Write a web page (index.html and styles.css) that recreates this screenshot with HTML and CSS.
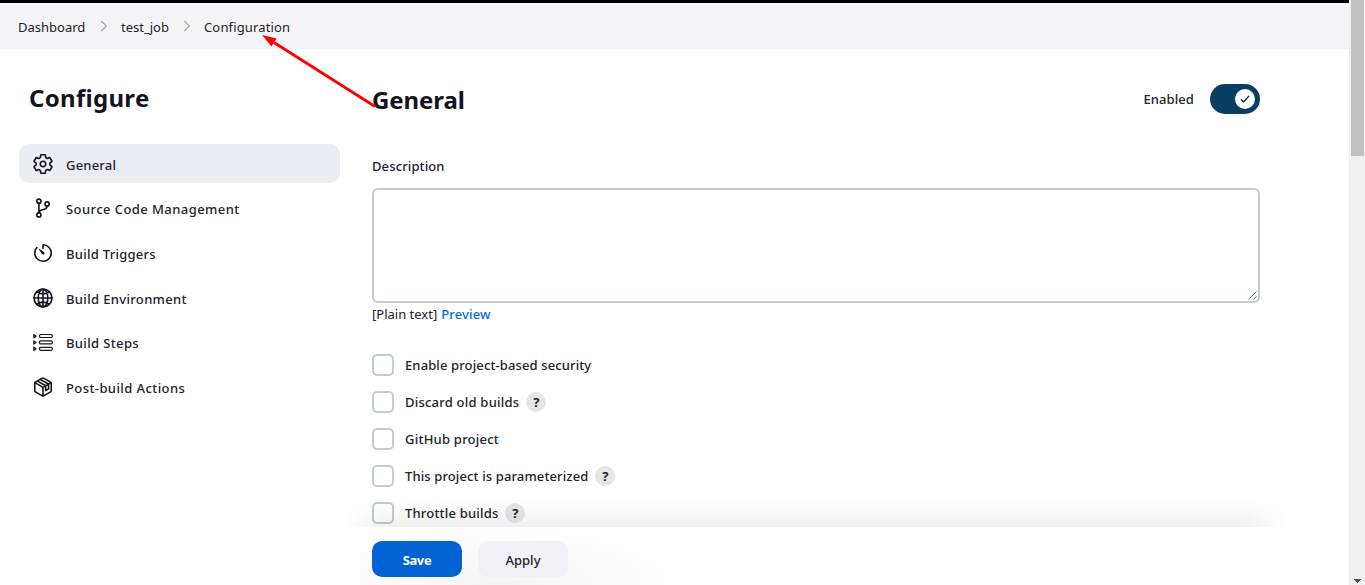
FILE: index.html
```html
<!DOCTYPE html>
<html lang="en">
<head>
<meta charset="utf-8">
<title>test_job Config</title>
<link rel="stylesheet" href="styles.css">
</head>
<body>
<div class="window">
  <div class="page">
    <nav class="breadcrumbs">
      <span class="crumb crumb-dash">Dashboard</span>
      <svg class="chevron" width="8" height="12" viewBox="0 0 8 12"><path d="M1.3 1l5 5-5 5"/></svg>
      <span class="crumb crumb-job">test_job</span>
      <svg class="chevron" width="8" height="12" viewBox="0 0 8 12"><path d="M1.3 1l5 5-5 5"/></svg>
      <span class="crumb crumb-config">Configuration</span>
    </nav>
    <div class="columns">
      <aside class="sidebar">
        <h1 class="title">Configure</h1>
        <ul class="tasks">
          <li class="task task-active">
            <svg class="icon" viewBox="0 0 512 512"><path d="M262.29 192.31a64 64 0 1057.4 57.4 64.13 64.13 0 00-57.4-57.4zM416.39 256a154.34 154.34 0 01-1.53 20.79l45.21 35.46a10.81 10.81 0 012.45 13.75l-42.77 74a10.81 10.81 0 01-13.14 4.59l-44.9-18.08a16.11 16.11 0 00-15.17 1.75A164.48 164.48 0 01325 400.8a15.94 15.94 0 00-8.82 12.14l-6.73 47.89a11.08 11.08 0 01-10.68 9.17h-85.54a11.11 11.11 0 01-10.69-8.87l-6.72-47.82a16.07 16.07 0 00-9-12.22 155.3 155.3 0 01-21.46-12.57 16 16 0 00-15.11-1.71l-44.89 18.07a10.81 10.81 0 01-13.14-4.58l-42.77-74a10.8 10.8 0 012.45-13.75l38.21-30a16.05 16.05 0 006-14.08c-.36-4.17-.58-8.33-.58-12.5s.21-8.27.58-12.35a16 16 0 00-6.07-13.94l-38.19-30A10.81 10.81 0 0149.48 186l42.77-74a10.81 10.81 0 0113.14-4.59l44.9 18.08a16.11 16.11 0 0015.17-1.75A164.48 164.48 0 01187 111.2a15.94 15.94 0 008.82-12.14l6.73-47.89A11.08 11.08 0 01213.23 42h85.54a11.11 11.11 0 0110.69 8.87l6.72 47.82a16.07 16.07 0 009 12.22 155.3 155.3 0 0121.46 12.57 16 16 0 0015.11 1.71l44.89-18.07a10.81 10.81 0 0113.14 4.58l42.77 74a10.8 10.8 0 01-2.45 13.75l-38.21 30a16.05 16.05 0 00-6.05 14.08c.33 4.14.55 8.3.55 12.47z"/></svg>
            <span class="task-label label-general">General</span>
          </li>
          <li class="task">
            <svg class="icon" viewBox="0 0 512 512"><circle cx="160" cy="96" r="48"/><circle cx="160" cy="416" r="48"/><circle cx="352" cy="160" r="48"/><path d="M160 368V144M352 208c0 128-192 48-192 160"/></svg>
            <span class="task-label label-scm">Source Code Management</span>
          </li>
          <li class="task">
            <svg class="icon" viewBox="0 0 512 512"><path d="M112.91 128A191.85 191.85 0 0064 254c-1.18 106.35 85.65 193.8 192 194 106.2.2 192-85.83 192-192 0-104.54-83.55-189.61-187.5-192a4.36 4.36 0 00-4.5 4.37V152"/><path class="solid" d="M233.38 278.63l-79-113a8.13 8.13 0 0111.32-11.32l113 79a32.5 32.5 0 01-37.25 53.26 33.21 33.21 0 01-8.07-7.94z"/></svg>
            <span class="task-label label-triggers">Build Triggers</span>
          </li>
          <li class="task">
            <svg class="icon" viewBox="0 0 512 512"><circle cx="256" cy="256" r="208"/><path d="M256 48c-58 0-113 93-113 208s55 208 113 208 113-93 113-208S314 48 256 48zM117 117c38 27 87 43 139 43s101-16 139-43M395 395c-38-27-87-43-139-43s-101 16-139 43M256 48v416M464 256H48"/></svg>
            <span class="task-label label-env">Build Environment</span>
          </li>
          <li class="task">
            <svg class="icon icon-list" viewBox="0 0 20 20"><path d="M.8 1.6v3.2L3 3.2zM.8 7.9v3.2L3 9.5zM.8 14.2v3.2L3 15.8z"/><rect x="6.5" y="1.5" width="12.8" height="3" rx="1.2"/><rect x="6.5" y="7.9" width="12.8" height="3" rx="1.2"/><rect x="6.5" y="14.3" width="12.8" height="3" rx="1.2"/></svg>
            <span class="task-label label-steps">Build Steps</span>
          </li>
          <li class="task">
            <svg class="icon" viewBox="0 0 512 512"><path d="M448 341.37V170.61A32 32 0 00432.11 143l-152-88.46a47.94 47.94 0 00-48.24 0L79.89 143A32 32 0 0064 170.61v170.76A32 32 0 0079.89 369l152 88.46a48 48 0 0048.24 0l152-88.46A32 32 0 00448 341.37z"/><path d="M69 153.99l187 110 187-110M256 463.99v-200M128 119l190 109v112l68-40V188L194 82"/></svg>
            <span class="task-label label-post">Post-build Actions</span>
          </li>
        </ul>
      </aside>
      <main class="content">
        <header class="section-head">
          <h2 class="section-title">General</h2>
          <div class="enabled">
            <span class="enabled-label">Enabled</span>
            <span class="toggle"><span class="knob"><svg width="10" height="8" viewBox="0 0 10 8"><path d="M1 4.3l2.5 2.6L9 1"/></svg></span></span>
          </div>
        </header>
        <div class="field-label">Description</div>
        <div class="textarea"><svg class="grip" width="9" height="9" viewBox="0 0 9 9"><path d="M.5 8.5l8-8M5.5 8.5l3-3"/></svg></div>
        <div class="format"><span class="plain">[Plain text]</span><a class="preview">Preview</a></div>
        <div class="options">
          <div class="option"><span class="box"></span><span class="option-label opt-security">Enable project-based security</span></div>
          <div class="option"><span class="box"></span><span class="option-label opt-discard">Discard old builds</span><span class="help">?</span></div>
          <div class="option"><span class="box"></span><span class="option-label opt-github">GitHub project</span></div>
          <div class="option"><span class="box"></span><span class="option-label opt-param">This project is parameterized</span><span class="help">?</span></div>
          <div class="option"><span class="box"></span><span class="option-label opt-throttle">Throttle builds</span><span class="help">?</span></div>
        </div>
      </main>
    </div>
    <div class="shade"></div>
    <footer class="actions">
      <div class="actions-glow"></div>
      <span class="btn btn-save">Save</span>
      <span class="btn btn-apply">Apply</span>
    </footer>
    <svg class="arrow" width="130" height="80" viewBox="0 0 130 80"><path class="arrow-line" d="M115 72.5L14 8.5"/><path class="arrow-head" d="M2 1L16.5 4.4L14 8.5L11.5 12.4z"/></svg>
  </div>
  <div class="scrollbar">
    <div class="thumb"></div>
    <svg class="scroll-down" width="7" height="4" viewBox="0 0 7 4"><path d="M0 0h7v1H6v1H5v1H4v1H3V3H2V2H1V1H0z"/></svg>
  </div>
</div>
</body>
</html>
```
FILE: styles.css
```css
* { box-sizing: border-box; }
body {
  margin: 0;
  overflow: hidden;
  background: #fff;
  color: #22222d;
  font: 500 13px/20px "Noto Sans", "Open Sans", sans-serif;
}
.window { display: flex; width: 1365px; height: 585px; overflow: hidden; }
.page { position: relative; width: 1349px; height: 585px; overflow: hidden; border-top: 3px solid #000; }
.breadcrumbs {
  display: flex;
  align-items: center;
  height: 46px;
  padding: 2px 0 0 18px;
  background: #f5f5f8;
  font-weight: 400;
}
.crumb, .task-label, .option-label { white-space: nowrap; }
.chevron { margin: -3px 13px 0 14px; fill: none; stroke: #a3a3b5; stroke-width: 1.2; flex: none; }
.crumb-dash { width: 68px; }
.crumb-job { width: 48px; }
.crumb-config { letter-spacing: .15px; }
.columns { display: flex; }
.sidebar { width: 340px; padding: 33px 0 0 19px; }
.title, .section-title { margin: 0; color: #14141f; font-size: 24px; line-height: 32px; font-weight: 700; }
.title { padding-left: 10px; letter-spacing: .3px; }
.section-title { letter-spacing: -.1px; }
.tasks { display: grid; gap: 5.7px; margin: 30px 0 0; padding: 0; list-style: none; }
.task { display: flex; align-items: center; height: 39px; padding-left: 13px; border-radius: 10px; }
.task-active { background: #ecedf3; }
.icon { width: 22px; height: 22px; margin-right: 12px; fill: none; stroke: #14141f; stroke-width: 38; stroke-linejoin: round; stroke-linecap: round; overflow: visible; }
.icon .solid { fill: #14141f; stroke: none; }
.icon-list { width: 20px; height: 20px; margin: 1px 13px 0 1px; stroke-width: 1.2; }
.task-label { padding-top: 2px; }
.label-general { letter-spacing: .2px; }
.label-scm { letter-spacing: .43px; }
.label-triggers { letter-spacing: .27px; }
.label-env { letter-spacing: .34px; }
.label-steps { letter-spacing: .36px; }
.label-post { letter-spacing: .41px; }
.content { width: 888px; margin-left: 32px; padding-top: 35px; }
.section-head { display: flex; justify-content: space-between; height: 32px; }
.enabled { display: flex; gap: 16px; height: 30px; align-items: center; }
.enabled-label { letter-spacing: .1px; }
.toggle { display: flex; align-items: center; justify-content: flex-end; width: 50px; height: 30px; padding-right: 5px; border-radius: 15px; background: #063f61; }
.knob { display: flex; align-items: center; justify-content: center; width: 20px; height: 20px; border-radius: 50%; background: #fff; }
.knob path { fill: none; stroke: #063f61; stroke-width: 1.5; }
.field-label { margin-top: 40px; letter-spacing: .12px; }
.textarea { display: flex; align-items: flex-end; justify-content: flex-end; height: 115px; margin-top: 12px; padding: 1px; border: 2px solid #c3ccd1; border-radius: 6px; }
.grip { fill: none; stroke: #555; stroke-width: .8; }
.format { display: flex; gap: 4px; margin-top: 1px; font-weight: 400; }
.preview { color: #006be0; font-weight: 500; letter-spacing: .15px; }
.options { display: grid; gap: 15px; margin-top: 30px; }
.option { display: flex; align-items: center; height: 22px; }
.opt-security { letter-spacing: .12px; }
.opt-discard { letter-spacing: .22px; }
.opt-github { letter-spacing: .23px; }
.opt-param { letter-spacing: .12px; }
.opt-throttle { letter-spacing: .19px; }
.box { width: 22px; height: 22px; margin-right: 11px; border: 2px solid #c3ccd1; border-radius: 5px; }
.help { display: flex; align-items: center; justify-content: center; width: 20px; height: 20px; margin-left: 7px; border-radius: 50%; background: #e6e6e6; font-weight: 700; }
.shade {
  position: absolute;
  left: 345px;
  top: 496px;
  width: 942px;
  height: 28px;
  background: linear-gradient(to bottom, rgba(0,0,0,0), rgba(0,0,0,.055));
  -webkit-mask-image: linear-gradient(to right, transparent, #000 40px, #000 900px, transparent);
}
.actions {
  position: absolute;
  left: 340px;
  top: 524px;
  width: 960px;
  height: 58px;
  display: flex;
  gap: 16px;
  padding: 14px 0 0 32px;
  background: #fff;
}
.actions-glow { position: absolute; left: 20px; top: 0; width: 330px; height: 58px; background: radial-gradient(ellipse 190px 64px at 42% 100%, rgba(0,0,0,.045), rgba(0,0,0,0)); }
.btn { position: relative; width: 90px; height: 36px; border-radius: 10px; padding-top: 1px; line-height: 36px; text-align: center; }
.btn-save { background: #0062d3; color: #fff; font-weight: 700; letter-spacing: -.4px; }
.btn-apply { background: #f2f2f6; }
.arrow { position: absolute; left: 260px; top: 31px; }
.arrow-line { stroke: #f00; stroke-width: 2.8; }
.arrow-head { fill: #f00; }
.scrollbar { display: flex; flex-direction: column; justify-content: space-between; align-items: center; width: 16px; height: 585px; padding-bottom: 2px; background: #f0f0f0; }
.thumb { width: 13px; height: 156px; margin-left: 1px; background: #c1c1c1; }
.scroll-down { fill: #505050; margin-left: 1px; }
```
